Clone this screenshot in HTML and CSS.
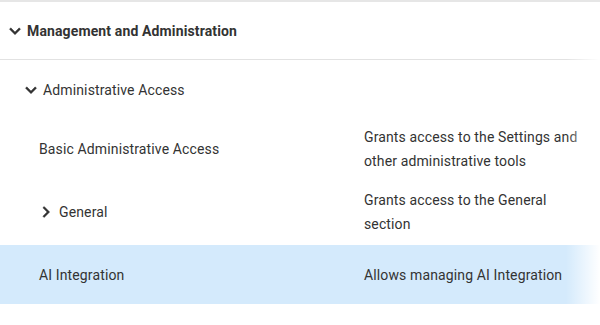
FILE: index.html
```html
<!DOCTYPE html>
<html lang="en">
<head>
  <meta charset="UTF-8">
  <meta name="viewport" content="width=device-width, initial-scale=1.0">
  <title>Permissions</title>
  <link rel="stylesheet" href="styles.css">
</head>
<body>
  <div class="panel">
    <div class="group-header">
      <svg class="icon" viewBox="0 0 24 24"><path d="M16.59 8.59L12 13.17 7.41 8.59 6 10l6 6 6-6z"/></svg>
      <span>Management and Administration</span>
    </div>
    <div class="sub-header">
      <svg class="icon" viewBox="0 0 24 24"><path d="M16.59 8.59L12 13.17 7.41 8.59 6 10l6 6 6-6z"/></svg>
      <span>Administrative Access</span>
    </div>
    <div class="row">
      <div class="name leaf">Basic Administrative Access</div>
      <div class="desc">Grants access to the Settings and other administrative tools</div>
    </div>
    <div class="row">
      <div class="name branch">
        <svg class="icon" viewBox="0 0 24 24"><path d="M10 6L8.59 7.41 13.17 12l-4.58 4.59L10 18l6-6z"/></svg>
        <span>General</span>
      </div>
      <div class="desc">Grants access to the General section</div>
    </div>
    <div class="row selected">
      <div class="name leaf">AI Integration</div>
      <div class="desc">Allows managing AI Integration</div>
    </div>
    <div class="fade"></div>
  </div>
</body>
</html>
```

FILE: styles.css
```css
* {
  box-sizing: border-box;
}

body {
  margin: 0;
  font-family: Roboto, "Liberation Sans", sans-serif;
  font-size: 14px;
  letter-spacing: 0.13px;
  color: #333;
  background: #fff;
}

.panel {
  position: relative;
  border-top: 2px solid #e6e6e6;
  overflow: hidden;
}

.icon {
  width: 22px;
  height: 22px;
  fill: #333;
  stroke: #333;
  stroke-width: 0.5;
  flex: none;
}

.group-header {
  display: flex;
  align-items: center;
  height: 58px;
  padding-left: 4px;
  gap: 1px;
  font-weight: 700;
  border-bottom: 1px solid #e2e2e2;
}

.sub-header {
  display: flex;
  align-items: center;
  height: 59px;
  padding-left: 20px;
  gap: 1px;
}

.row {
  display: flex;
  align-items: center;
  min-height: 59px;
  padding: 6px 0 9px;
  line-height: 24px;
}

.row.selected {
  padding: 7.5px 0;
  background-color: #d4eafc;
}

.row .name {
  width: 364px;
  flex: none;
  display: flex;
  align-items: center;
}

.row .name.leaf {
  padding-left: 39px;
}

.row .name.branch {
  padding-left: 35px;
  gap: 2px;
}

.row .desc {
  width: 226px;
  flex: none;
}

.fade {
  position: absolute;
  top: -2px;
  right: 0;
  bottom: 0;
  width: 34px;
  background: linear-gradient(to right, rgba(255, 255, 255, 0), #fff);
}
```
